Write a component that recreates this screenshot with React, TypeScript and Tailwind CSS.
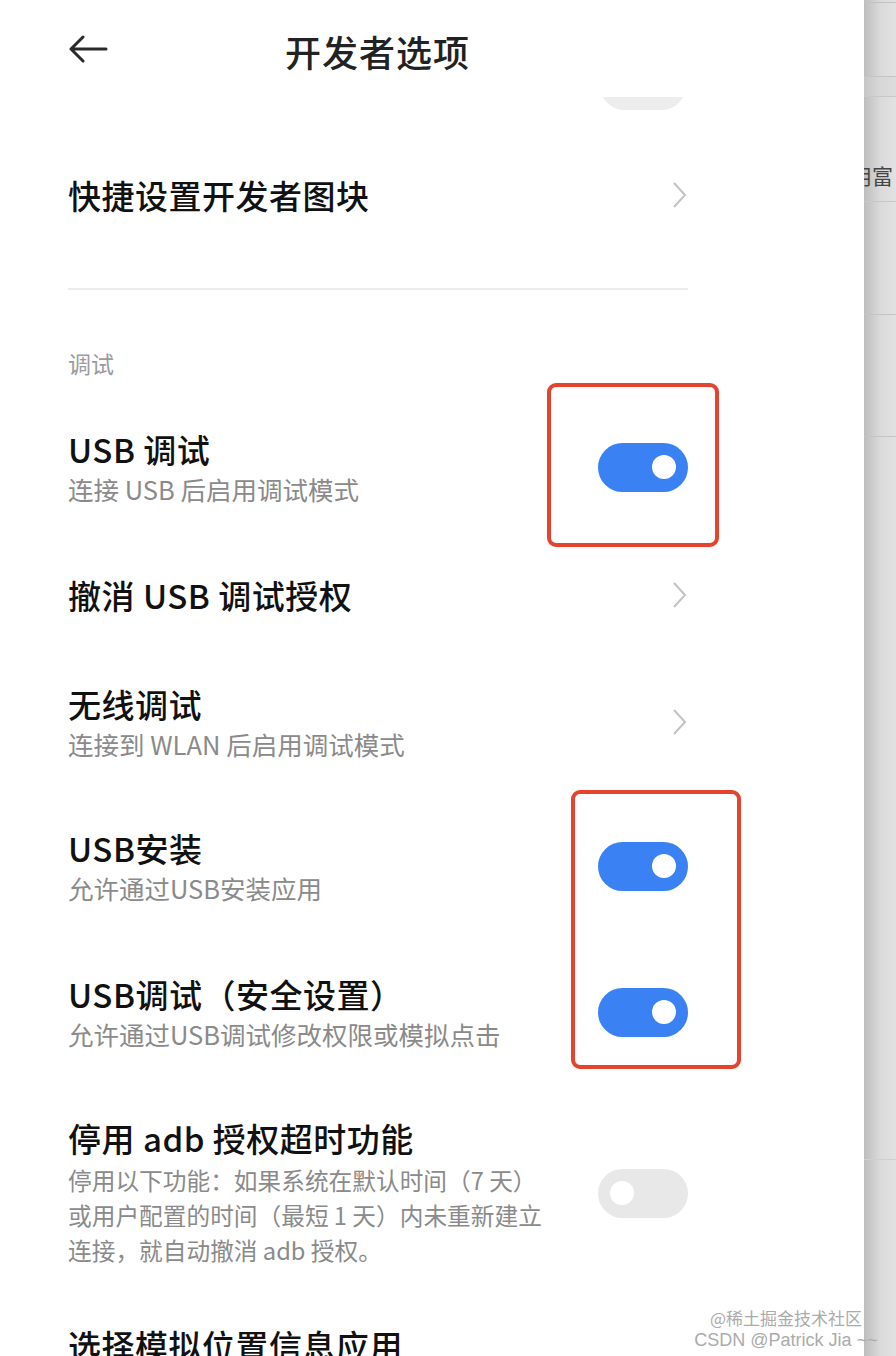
import React from "react";

const FONT = { fontFamily: '"Noto Sans CJK SC", "Noto Sans", sans-serif' };

function Toggle({ on }: { on: boolean }) {
  return (
    <div
      className={`flex h-[49px] w-[90px] shrink-0 items-center rounded-full px-[12px] ${
        on ? "justify-end bg-[#3a82f4]" : "justify-start bg-[#e8e8e8]"
      }`}
    >
      <span className="h-[24px] w-[24px] rounded-full bg-white" />
    </div>
  );
}

function Chevron() {
  return (
    <svg width="16" height="28" viewBox="0 0 16 28" className="shrink-0 mr-[1px]">
      <polyline points="3,2 14,14 3,26" fill="none" stroke="#c2c2c2" strokeWidth="2" />
    </svg>
  );
}

function Title({ children }: { children: React.ReactNode }) {
  return (
    <p className="text-[33px] font-medium leading-[40px] tracking-[0.5px] text-[#111]">{children}</p>
  );
}

function Sub({ children }: { children: React.ReactNode }) {
  return <p className="mt-[3px] text-[25.5px] leading-[34px] text-[#8a8a8a]">{children}</p>;
}

interface Row {
  title:  string;
  sub?:   React.ReactNode;
  right:  "on" | "off" | "chevron";
  height: string;
}

const rows: Row[] = [
  { title: "USB 调试",            sub: "连接 USB 后启用调试模式",           right: "on",      height: "h-[146px]" },
  { title: "撤消 USB 调试授权",                                              right: "chevron", height: "h-[110px]" },
  { title: "无线调试",            sub: "连接到 WLAN 后启用调试模式",        right: "chevron", height: "h-[144px]" },
  { title: "USB安装",             sub: "允许通过USB安装应用",               right: "on",      height: "h-[144px]" },
  { title: "USB调试（安全设置）", sub: "允许通过USB调试修改权限或模拟点击", right: "on",      height: "h-[148px]" },
];

export default function App() {
  return (
    <div className="relative flex h-[1356px] w-[896px] overflow-hidden bg-white" style={FONT}>
      {/* main settings panel */}
      <div className="relative w-[864px] shrink-0 bg-white">
        {/* header */}
        <div className="flex h-[97px] items-center pl-[68px]">
          <svg width="40" height="28" viewBox="0 0 40 28">
            <path d="M38 14H3M15 2L3 14l12 12" fill="none" stroke="#2a2a2a" strokeWidth="3" strokeLinecap="round" strokeLinejoin="round" />
          </svg>
          <h1 className="ml-[177px] mt-[4px] text-[36px] font-medium tracking-[1px] text-[#222]">开发者选项</h1>
        </div>

        {/* peeking toggle scrolled under header */}
        <div className="flex h-[13px] items-end overflow-hidden pl-[600px]">
          <div className="h-[49px] w-[86px] shrink-0 rounded-full bg-[#ededed]" />
        </div>

        <div className="w-[688px] pl-[68px]">
          <div className="flex h-[170px] items-center justify-between">
            <Title>快捷设置开发者图块</Title>
            <Chevron />
          </div>

          <div className="pt-[8px]">
            <div className="h-[2px] bg-[#ececec]" />
          </div>

          <div className="flex h-[104px] items-end pb-[16px]">
            <p className="text-[23px] leading-[30px] text-[#9b9b9f]">调试</p>
          </div>

          {rows.map((r) => (
            <div key={r.title} className={`flex ${r.height} items-center justify-between`}>
              <div>
                <Title>{r.title}</Title>
                {r.sub && <Sub>{r.sub}</Sub>}
              </div>
              {r.right === "chevron" ? <Chevron /> : <Toggle on={r.right === "on"} />}
            </div>
          ))}

          <div className="flex h-[214px] items-center justify-between">
            <div>
              <Title>停用 adb 授权超时功能</Title>
              <p className="mt-[5px] text-[23.7px] leading-[35px] text-[#8a8a8a]">
                停用以下功能：如果系统在默认时间（7 天）
                <br />
                或用户配置的时间（最短 1 天）内未重新建立
                <br />
                连接，就自动撤消 adb 授权。
              </p>
            </div>
            <Toggle on={false} />
          </div>

          <div className="pt-[25px]">
            <Title>选择模拟位置信息应用</Title>
          </div>
        </div>

        {/* annotation boxes */}
        <div className="absolute left-[547px] top-[383px] h-[164px] w-[172px] rounded-[9px] border-[4px] border-[#e6432e]" />
        <div className="absolute left-[571px] top-[790px] h-[279px] w-[170px] rounded-[9px] border-[4px] border-[#e6432e]" />
      </div>

      {/* neighbouring window edge */}
      <div className="flex w-[32px] shrink-0 flex-col overflow-hidden bg-gradient-to-r from-[#bdbdbd] via-[#dadada] to-[#e2e2e2]">
        <div className="h-[3px] shrink-0 border-b border-[#c2c2c2]" />
        <div className="h-[74px] shrink-0 border-b border-[#c4c4c4]" />
        <div className="h-[20px] shrink-0 border-b border-[#c8c8c8] bg-[#d4d4d4]/40" />
        <div className="flex h-[105px] shrink-0 items-end border-b border-[#c8c8c8] pb-[14px]">
          <span className="-ml-[13px] whitespace-nowrap text-[21px] leading-[24px] text-[#444]">用富</span>
        </div>
        <div className="h-[113px] shrink-0 border-b border-[#c4c4c4]" />
        <div className="h-[122px] shrink-0 border-b border-[#c4c4c4]" />
        <div className="h-[723px] shrink-0 border-b border-[#cfcfcf]" />
        <div className="flex-1" />
      </div>

      {/* watermark */}
      <div className="pointer-events-none absolute left-[680px] top-[1307px] w-[212px] text-center leading-[22px] text-[#ababab]">
        <p className="text-[17px]">@稀土掘金技术社区</p>
        <p className="text-[18px]" style={{ fontFamily: '"Liberation Sans", sans-serif' }}>CSDN @Patrick Jia ~~</p>
      </div>
    </div>
  );
}
